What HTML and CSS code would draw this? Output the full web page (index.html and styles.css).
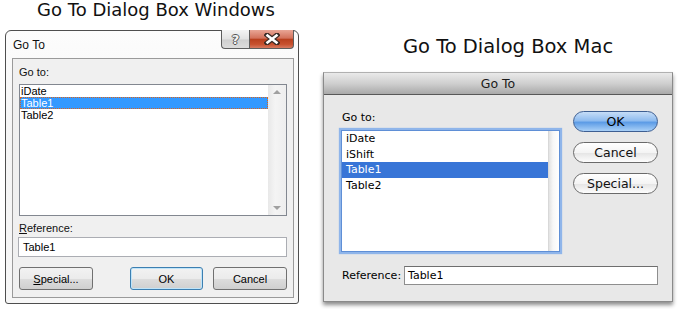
FILE: index.html
```html
<!DOCTYPE html>
<html>
<head>
<meta charset="utf-8">
<link rel="stylesheet" href="styles.css">
</head>
<body>
<div class="page">
  <section class="col win-col">
    <h1 class="heading win-heading">Go To Dialog Box Windows</h1>
    <div class="win">
      <div class="win-titlebar">
        <span class="win-title">Go To</span>
        <div class="win-caption-btns">
          <span class="cap-btn cap-help">?</span>
          <span class="cap-btn cap-close">
            <svg width="16" height="12" viewBox="0 0 16 12">
              <path d="M3 2 L13 10 M13 2 L3 10" stroke="#3a2a26" stroke-width="5" stroke-linecap="square"/>
              <path d="M3.5 2.5 L12.5 9.5 M12.5 2.5 L3.5 9.5" stroke="#ffffff" stroke-width="2.6" stroke-linecap="square"/>
            </svg>
          </span>
        </div>
      </div>
      <div class="win-panel">
        <div class="win-label">Go to:</div>
        <div class="win-list">
          <div class="win-rows">
            <div class="win-row">iDate</div>
            <div class="win-row win-row-sel">Table1</div>
            <div class="win-row">Table2</div>
          </div>
          <div class="win-scroll">
            <span class="arrow-up"></span>
            <span class="arrow-down"></span>
          </div>
        </div>
        <div class="win-label win-ref-label"><u>R</u>eference:</div>
        <div class="win-input">Table1</div>
        <div class="win-buttons">
          <span class="win-btn win-btn-special"><u>S</u>pecial...</span>
          <div class="win-btn-group">
            <span class="win-btn win-btn-ok">OK</span>
            <span class="win-btn win-btn-cancel">Cancel</span>
          </div>
        </div>
      </div>
    </div>
  </section>

  <section class="col mac-col">
    <h1 class="heading mac-heading">Go To Dialog Box Mac</h1>
    <div class="mac">
      <div class="mac-titlebar">Go To</div>
      <div class="mac-body">
        <div class="mac-top">
          <div class="mac-left">
            <div class="mac-label">Go to:</div>
            <div class="mac-list">
              <div class="mac-rows">
                <div class="mac-row">iDate</div>
                <div class="mac-row">iShift</div>
                <div class="mac-row mac-row-sel">Table1</div>
                <div class="mac-row">Table2</div>
              </div>
              <div class="mac-track"></div>
            </div>
          </div>
          <div class="mac-buttons">
            <span class="mac-btn mac-btn-ok">OK</span>
            <span class="mac-btn">Cancel</span>
            <span class="mac-btn">Special...</span>
          </div>
        </div>
        <div class="mac-ref">
          <span class="mac-ref-label">Reference:</span>
          <span class="mac-input">Table1</span>
        </div>
      </div>
    </div>
  </section>
</div>
</body>
</html>
```
FILE: styles.css
```css
html, body {
  margin: 0;
  padding: 0;
  background: #ffffff;
}

.page {
  display: flex;
  align-items: flex-start;
  padding-left: 5px;
  gap: 24px;
  width: 680px;
  height: 309px;
  box-sizing: border-box;
  overflow: hidden;
}

.col {
  display: flex;
  flex-direction: column;
}

.heading {
  margin: 0;
  font-family: "DejaVu Sans", Verdana, sans-serif;
  font-weight: normal;
  font-size: 18px;
  line-height: 20px;
  color: #111;
  text-align: center;
  white-space: nowrap;
}

.win-heading {
  margin-top: 0;
  padding-left: 8px;
  height: 20px;
}

/* ---------- Windows dialog ---------- */
.win {
  margin-top: 10px;
  width: 294px;
  box-sizing: border-box;
  border: 1px solid #4e4e4e;
  border-radius: 6px 6px 3px 3px;
  background: linear-gradient(#fcfcfc, #f5f5f5 40%, #f7f7f7);
  font-family: "Liberation Sans", Arial, sans-serif;
  color: #000;
}

.win-titlebar {
  display: flex;
  align-items: flex-start;
  height: 27px;
  padding-left: 7px;
}

.win-title {
  font-size: 12px;
  line-height: 12px;
  margin-top: 8px;
  color: #111;
}

.win-caption-btns {
  margin-left: auto;
  margin-right: 4px;
  margin-top: -1px;
  display: flex;
}

.cap-btn {
  display: flex;
  align-items: center;
  justify-content: center;
  height: 19px;
  box-sizing: border-box;
  border: 1px solid #5d5d5d;
  border-top: none;
}

.cap-help {
  width: 28px;
  border-right: none;
  border-radius: 0 0 0 4px;
  background: linear-gradient(#f4f4f4, #e2e2e2 50%, #cfcfcf 55%, #dcdcdc);
  font-family: "DejaVu Sans", sans-serif;
  font-weight: bold;
  font-size: 13px;
  color: #f4f4f4;
  text-shadow: 1px 0 #555, -1px 0 #555, 0 1px #555, 0 -1px #555;
}

.cap-close {
  width: 45px;
  border-radius: 0 0 4px 0;
  background: linear-gradient(#e9a696, #d3715b 45%, #b9401f 52%, #c8512f 80%, #d77a62);
}

.win-panel {
  margin: 0 4px 5px 6px;
  border: 1px solid #9a9a9a;
  background: #f0f0f0;
  padding: 7px 6px 7px 6px;
  display: flex;
  flex-direction: column;
}

.win-label {
  font-size: 11px;
  line-height: 12px;
  height: 12px;
  color: #111;
}

.win-ref-label {
  margin-top: 6px;
}

.win-list {
  margin-top: 6px;
  height: 132px;
  box-sizing: border-box;
  border: 1px solid #828790;
  background: #ffffff;
  display: flex;
}

.win-rows {
  flex: 1;
}

.win-row {
  font-size: 11px;
  line-height: 12px;
  height: 12px;
  padding-left: 1px;
  box-sizing: border-box;
}

.win-row-sel {
  background: #3399ff;
  color: #ffffff;
  outline: 1px dotted #d9641e;
  outline-offset: -1px;
}

.win-scroll {
  width: 18px;
  background: linear-gradient(90deg, #e8e8e8, #f4f4f4 40%, #eeeeee);
  display: flex;
  flex-direction: column;
  justify-content: space-between;
  align-items: center;
  padding: 5px 0 5px 0;
  box-sizing: border-box;
}

.arrow-up {
  width: 0;
  height: 0;
  border-left: 4px solid transparent;
  border-right: 4px solid transparent;
  border-bottom: 4px solid #a0a0a0;
}

.arrow-down {
  width: 0;
  height: 0;
  border-left: 4px solid transparent;
  border-right: 4px solid transparent;
  border-top: 4px solid #a0a0a0;
}

.win-input {
  margin-top: 3px;
  margin-left: -1px;
  height: 20px;
  box-sizing: border-box;
  border: 1px solid #abadb3;
  background: #ffffff;
  font-size: 11px;
  line-height: 18px;
  padding-left: 4px;
}

.win-buttons {
  margin-top: 10px;
  display: flex;
  justify-content: space-between;
}

.win-btn-group {
  display: flex;
  gap: 10px;
}

.win-btn {
  display: flex;
  align-items: center;
  justify-content: center;
  height: 23px;
  box-sizing: border-box;
  border: 1px solid #707070;
  border-radius: 3px;
  background: linear-gradient(#f2f2f2, #ebebeb 50%, #dddddd 51%, #cfcfcf);
  font-size: 11px;
  color: #000;
}

.win-btn-special { width: 74px; }
.win-btn-ok {
  width: 73px;
  border-color: #3c7fb1;
  box-shadow: inset 0 0 0 1px #bfe4f9;
}
.win-btn-cancel { width: 74px; }

/* ---------- Mac dialog ---------- */
.mac-heading {
  margin-top: 37px;
  padding-left: 20px;
  height: 20px;
  font-size: 19.5px;
}

.mac {
  margin-top: 15px;
  width: 350px;
  box-sizing: border-box;
  border: 1px solid #8a8a8a;
  border-top-color: #b0b0b0;
  background: #e8e8e8;
  box-shadow: 0 3px 4px rgba(0, 0, 0, 0.45);
  font-family: "DejaVu Sans", "Lucida Grande", sans-serif;
  color: #000;
}

.mac-titlebar {
  height: 22px;
  box-sizing: border-box;
  border-bottom: 1px solid #585858;
  background: linear-gradient(#e9e9e9, #cfcfcf 50%, #a9a9a9);
  font-size: 12.5px;
  line-height: 21px;
  text-align: center;
  color: #1a1a1a;
  border-radius: 4px 4px 0 0;
}

.mac-body {
  padding: 16px 14px 16px 17px;
  display: flex;
  flex-direction: column;
}

.mac-top {
  display: flex;
  align-items: flex-start;
}

.mac-left {
  display: flex;
  flex-direction: column;
}

.mac-label {
  font-size: 11px;
  line-height: 14px;
  height: 14px;
  padding-left: 1px;
}

.mac-list {
  margin-top: 5px;
  width: 219px;
  height: 122px;
  box-sizing: border-box;
  border: 1px solid #5f8fd6;
  box-shadow: 0 0 1px 2px #8fb5ea;
  background: #ffffff;
  display: flex;
}

.mac-rows {
  flex: 1;
}

.mac-row {
  font-size: 11px;
  line-height: 15.5px;
  height: 15.5px;
  padding-left: 4px;
}

.mac-row-sel {
  background: #3875d7;
  color: #ffffff;
}

.mac-track {
  width: 10px;
  background: linear-gradient(90deg, #e2e2e2, #f7f7f7 40%, #ffffff);
  border-left: 1px solid #d8d8d8;
}

.mac-buttons {
  margin-left: auto;
  display: flex;
  flex-direction: column;
  gap: 10px;
}

.mac-btn {
  display: flex;
  align-items: center;
  justify-content: center;
  width: 85px;
  height: 21px;
  box-sizing: border-box;
  border: 1px solid #6a6a6a;
  border-radius: 11px;
  background: linear-gradient(#ffffff, #f4f4f4 50%, #e6e6e6 55%, #fdfdfd);
  font-size: 12.5px;
  color: #111;
}

.mac-btn-ok {
  border-color: #3e5f92;
  background: linear-gradient(#c6ddf7, #8fbcef 45%, #5d9ce6 55%, #a9d0f7);
  color: #000;
}

.mac-ref {
  margin-top: 14px;
  display: flex;
  align-items: center;
}

.mac-ref-label {
  font-size: 11px;
  width: 62px;
  padding-left: 1px;
}

.mac-input {
  flex: 1;
  height: 19px;
  box-sizing: border-box;
  border: 1px solid #8e8e8e;
  border-top-color: #6e6e6e;
  background: #ffffff;
  font-size: 11px;
  line-height: 17px;
  padding-left: 3px;
}
```
